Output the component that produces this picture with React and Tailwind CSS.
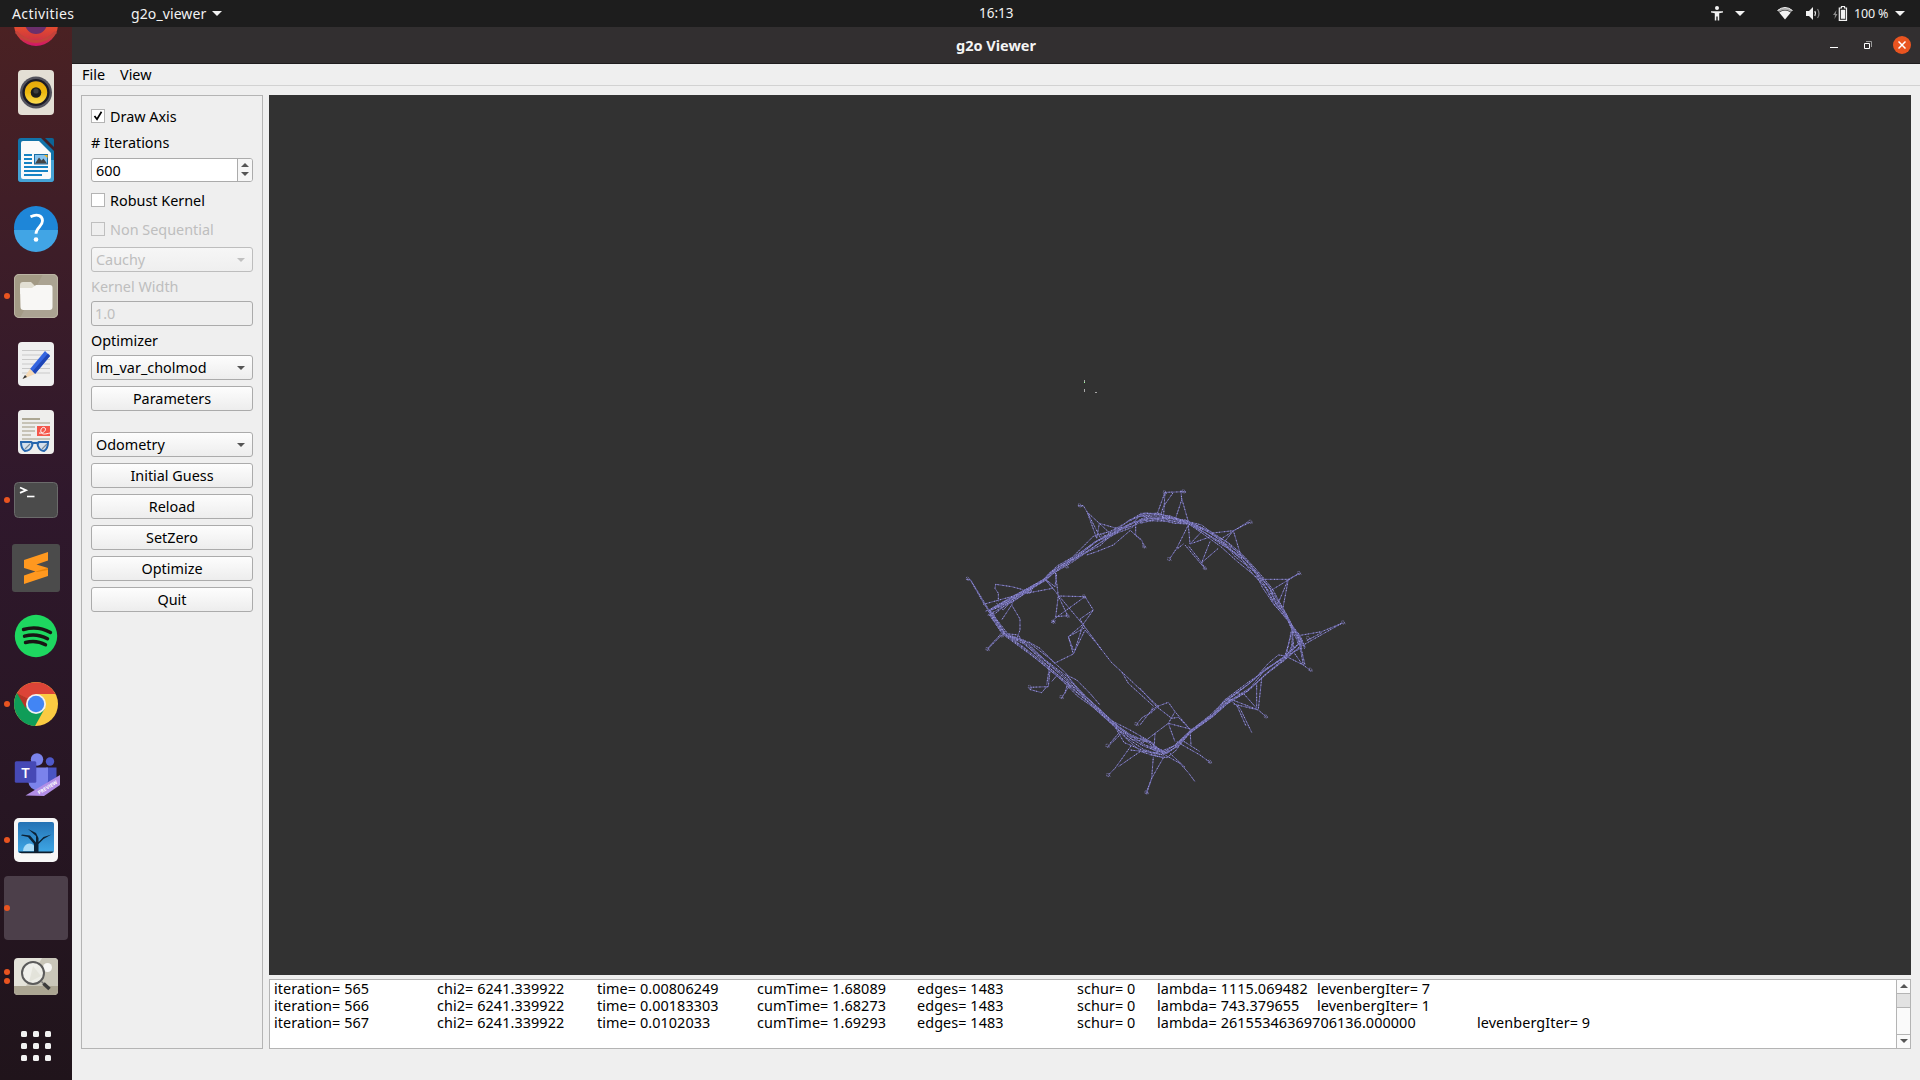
import React from "react";

/* ---------- pose graph ---------- */

const BANDS = [
  [[150, 425, 15], [220, 385, 12], [315, 328, 5], [345, 300, 9], [400, 265, 10], [470, 215, 18], [520, 188, 10], [570, 160, 15], [610, 142, 11], [660, 142, 12], [700, 147, 8], [745, 158, 6]],
  [[745, 158, 5], [800, 187, 11], [850, 218, 16], [900, 262, 15], [940, 300, 13], [980, 350, 13], [1010, 400, 9], [1040, 440, 5], [1058, 475, 3], [1075, 500, 10], [1085, 530, 12]],
  [[1078, 520, 14], [1037, 560, 8], [970, 608, 12], [920, 655, 11], [866, 690, 7], [815, 738, 7], [750, 785, 6], [710, 828, 8], [675, 852, 10], [630, 835, 18]],
  [[150, 425, 8], [190, 490, 10], [250, 520, 16], [310, 568, 16], [370, 620, 14], [410, 662, 11], [460, 708, 12], [520, 762, 11], [570, 803, 22], [620, 828, 24], [660, 848, 12]],
];

const TRACKS = [
  { dx: 0, dy: 0, lines: [
    "415,107 430,107 442,127 478,160 530,175 570,170", "442,127 470,205", "442,127 482,205", "478,160 470,205", "478,160 510,190",
    "570,150 600,133 650,130", "587,150 587,195 605,210 613,232", "570,180 600,208", "440,255 470,245 520,225 570,182",
    "345,300 355,378", "350,310 345,350 317,328", "315,328 338,355 232,375 130,403", "317,328 357,378", "80,327 92,330 150,425",
    "90,328 133,403 165,450", "175,395 175,370 165,355 167,343 215,350 245,358 270,370 280,350", "150,420 315,326", "232,375 315,330",
    "355,378 435,380 460,420 430,462 385,500 400,540", "355,378 347,440 383,437", "355,378 383,437", "435,380 345,445 335,457 347,452",
    "357,378 430,465 460,505 485,540", "430,462 403,545", "385,500 437,472", "460,420 420,447 433,470", "215,405 240,447 240,480 230,508",
    "215,405 185,450", "170,400 190,420 220,385", "180,495 143,535", "190,490 235,495 250,520", "180,410 225,380 215,405",
  ] },
  { dx: 600, dy: 0, lines: [
    "75,67 138,65", "75,67 52,130", "100,67 70,110 62,135", "75,67 70,150", "123,60 125,90 105,150", "125,85 145,155",
    "0,130 55,130 105,148 145,155", "145,165 110,235 88,268", "145,165 150,222 212,200", "130,222 110,238", "145,227 185,278 195,297",
    "135,225 190,290", "185,278 210,215", "185,278 235,235", "150,222 185,185", "210,190 280,182 332,156", "230,215 325,155",
    "280,182 250,220", "280,182 305,265", "365,328 445,328 478,310", "390,363 478,310", "445,328 412,405", "445,328 428,418",
    "475,497 545,485 610,458", "490,525 605,460", "500,512 545,488", "455,478 438,560", "458,475 455,545", "475,500 490,585",
    "0,160 50,148 105,160 145,162", "250,220 300,265", "145,155 185,165 230,200",
  ] },
  { dx: 0, dy: 480, lines: [
    "185,15 140,60", "435,0 400,72 343,100", "385,20 400,72", "435,0 470,40 515,98 550,130 655,230", "545,125 565,160 640,228",
    "655,230 630,250 607,262 590,283", "635,250 637,232", "330,120 325,170 268,172", "268,178 305,188 322,168", "330,100 320,165",
    "335,155 352,135", "390,165 365,203", "385,150 375,190", "380,135 410,150 450,190 480,225", "545,310 503,350", "540,305 510,340",
    "575,345 525,415 503,437", "600,365 535,410", "640,380 635,445 620,490", "570,360 660,370", "520,275 570,300 640,340", "265,35 300,55 345,100",
  ] },
  { dx: 600, dy: 480, lines: [
    "0,175 50,230 95,265", "85,217 105,245 150,298", "0,285 35,240 50,230 85,217", "95,265 115,262 150,298", "85,280 155,298", "85,280 105,335",
    "105,245 85,280 45,310 0,345", "150,298 153,345", "110,335 150,358 180,375 210,397", "125,330 180,365", "75,375 120,400 145,428 165,455",
    "90,370 135,412", "72,380 35,445 18,490", "45,310 42,360", "0,320 42,345 75,372", "265,205 350,238", "280,222 355,240 378,260",
    "365,145 355,238", "350,160 350,235", "310,190 350,235", "265,205 300,235 335,307", "290,225 318,288", "350,140 385,100 415,75 440,78",
    "440,80 490,105 512,122", "435,78 458,0", "475,20 495,105", "460,65 488,105", "458,0 460,60",
  ] },
];

const TIPS = [
  [420, 107], [84, 327], [613, 230], [732, 65], [675, 68], [932, 156], [1078, 310], [1210, 458], [1112, 600], [978, 740],
  [143, 538], [270, 652], [365, 682], [503, 828], [505, 916], [620, 968], [810, 876], [688, 268], [795, 295], [590, 763],
  [340, 456], [433, 380], [185, 497], [228, 508], [865, 690], [893, 668], [380, 290], [490, 197], [270, 362], [383, 438], [1105, 505],
];

function strands(band, seed) {
  let s = seed * 7919 + 17;
  const rnd = () => {
    s = (s * 16807) % 2147483647;
    return (s / 2147483647) * 2 - 1;
  };
  rnd();
  return Array.from({ length: 8 }, (_, k) => {
    const base = (k / 7) * 2 - 1;
    return band
      .map(([x, y, w], i) => {
        const [px, py] = band[Math.max(0, i - 1)];
        const [nx, ny] = band[Math.min(band.length - 1, i + 1)];
        const len = Math.hypot(nx - px, ny - py);
        const ux = (nx - px) / len;
        const uy = (ny - py) / len;
        const o = (base * 0.65 + rnd() * 0.5) * w;
        const slide = rnd() * 14;
        return `${(x - uy * o + ux * slide).toFixed(1)},${(y + ux * o + uy * slide).toFixed(1)}`;
      })
      .join(" ");
  });
}

function Edge({ points, phase = 0 }) {
  return (
    <>
      <polyline points={points} stroke="#6562a4" strokeWidth="3" strokeOpacity="0.85" />
      <polyline points={points} stroke="#b3b0f6" strokeWidth="3" strokeDasharray="3 8 3 5 3 12" strokeDashoffset={phase} strokeOpacity="0.85" />
    </>
  );
}

function PoseGraph() {
  return (
    <svg className="block h-full w-full" viewBox="269 95 1642 880" fill="none">
      <g transform="translate(940 470) scale(0.33333)" strokeLinejoin="round">
        {BANDS.map((b, i) => strands(b, i + 1).map((p, j) => <Edge key={`${i}-${j}`} points={p} phase={j * 5} />))}
        {TRACKS.map((t, i) => (
          <g key={i} transform={`translate(${t.dx} ${t.dy})`}>
            {t.lines.map((p, j) => <Edge key={j} points={p} phase={j * 4} />)}
          </g>
        ))}
        {TIPS.map(([x, y], i) => (
          <path key={i} d={`M${x - 6} ${y - 4}l5 -2l5 4l-2 6l-6 -1l-2 -5m9 3l4 3`} stroke="#9490da" strokeWidth="2" strokeDasharray="4 2" />
        ))}
      </g>
      <path d="M1084 380h1v2h-1zM1084 389h1v3h-1zM1095 392h2v1h-2z" fill="#a8a8a8" />
      <path d="M1084 382h1v1h-1z" fill="#9dfb9d" />
    </svg>
  );
}

/* ---------- dock ---------- */

const Icon = ({ children, size = 48 }) => (
  <svg width={size} height={size} viewBox="0 0 48 48" fill="none">{children}</svg>
);

const FirefoxIcon = () => (
  <Icon>
    <defs>
      <linearGradient id="ff" x1="0" y1="0" x2="0" y2="1">
        <stop offset="0.5" stopColor="#e8502c" />
        <stop offset="0.8" stopColor="#d23a3c" />
        <stop offset="1" stopColor="#d3146c" />
      </linearGradient>
    </defs>
    <circle cx="24" cy="24" r="22" fill="url(#ff)" />
    <path d="M4 32q20 19 40 0" stroke="#c3433a" strokeWidth="3" />
    <circle cx="24" cy="23" r="11" fill="#6b2f6b" />
  </Icon>
);

const RhythmboxIcon = () => (
  <Icon>
    <defs>
      <linearGradient id="rb" x1="0" y1="0" x2="0" y2="1">
        <stop offset="0" stopColor="#e8a90c" />
        <stop offset="0.5" stopColor="#edb80f" />
        <stop offset="1" stopColor="#fbdc50" />
      </linearGradient>
    </defs>
    <rect x="6" y="2" width="36" height="45" rx="4" fill="#e3dfd5" />
    <circle cx="24" cy="24.5" r="16" fill="#53535d" />
    <circle cx="24" cy="24.5" r="13.6" fill="#1b1b26" />
    <circle cx="24" cy="24.5" r="11.2" fill="url(#rb)" />
    <circle cx="24" cy="24.5" r="5.3" fill="#1d1d1d" />
    <circle cx="24" cy="23" r="2.6" fill="#3e3e3e" />
  </Icon>
);

const WriterIcon = () => (
  <Icon>
    <path d="M9 2h20l13 13v28a3 3 0 0 1-3 3H9a3 3 0 0 1-3-3V5a3 3 0 0 1 3-3z" fill="#1273a9" />
    <path d="M6 24h36v19a3 3 0 0 1-3 3H9a3 3 0 0 1-3-3z" fill="#45a3d6" />
    <path d="M33 2h7a2 2 0 0 1 2 2v7z" fill="#0c6596" />
    <path d="M11 5h16l12 12v24a2 2 0 0 1-2 2H11a2 2 0 0 1-2-2V7a2 2 0 0 1 2-2z" fill="#fafafa" />
    <path d="M12 19h8M12 23h8M12 27h8M12 31h24M12 35h24M12 39h18" stroke="#1583c4" strokeWidth="2" />
    <rect x="22.5" y="18.5" width="13" height="9.5" fill="#86c3ee" stroke="#1a6fa5" />
    <path d="M23 27.5l4-6 2.500 3 2-2 3.500 5z" fill="#444" />
    <path d="M32 19h3.500v3z" fill="#f6b420" />
  </Icon>
);

const HelpIcon = () => (
  <Icon>
    <circle cx="24" cy="24" r="22" fill="#1e86d8" />
    <path d="M2 26h44a22 22 0 0 1-44 0z" fill="#41a5e5" />
    <path d="M18.500 12.800c7-3.500 12-1 12 4 0 6-6.500 6.500-6.500 13" stroke="#fff" strokeWidth="2.800" />
    <circle cx="24" cy="35.500" r="2.300" fill="#fff" />
  </Icon>
);

const FilesIcon = () => (
  <Icon>
    <rect x="2" y="2" width="44" height="44" rx="5" fill="#a39a85" />
    <path d="M31 2h10a5 5 0 0 1 5 5v34a5 5 0 0 1-5 5H8z" fill="#aba392" />
    <rect x="2.5" y="2.5" width="43" height="43" rx="4.5" stroke="#bbb4a4" />
    <path d="M8 13a3 3 0 0 1 3-3h8l4 4h10v8H8z" fill="#e2dfd3" />
    <path d="M8 16h12l4-3h14a2.500 2.500 0 0 1 2.500 2.500V35a3 3 0 0 1-3 3h-26a3 3 0 0 1-3-3z" fill="#f8f7f5" />
  </Icon>
);

const GeditIcon = () => (
  <Icon>
    <rect x="6" y="2" width="36" height="44" rx="4" fill="#efefef" />
    <path d="M10 10.500h28M10 15h28M10 19.500h28M10 24h28M10 28.500h28M10 33h28" stroke="#c9c9c9" />
    <path d="M33 11l5 5-15 18-5-5z" fill="#3465e0" />
    <path d="M36 13.500l2 2.500-15 18-2.500-2.500z" fill="#1f46b6" />
    <path d="M18 29l5 5-12 5z" fill="#f5d9b4" />
    <path d="M13 35l2 2-4.500 2z" fill="#333" />
  </Icon>
);

const EvinceIcon = () => (
  <Icon>
    <rect x="6" y="2" width="36" height="44" rx="4" fill="#eeeeec" />
    <path d="M10 11h18" stroke="#aca793" strokeWidth="2" />
    <path d="M10 15h28M10 19h13M10 23h13M10 27h9M10 31h28" stroke="#c7c3b6" strokeWidth="2" />
    <rect x="25" y="18" width="13" height="10" fill="#f4574b" />
    <path d="M27 25c4 1 8-3 6-5s-5 1-4 4 5 2 9 1" stroke="#fff" />
    <path d="M8 34c4-1.500 9-1 12 0 2-1 6-1 8 0 3-1 6-1 9 0-0.500 5-1 8-5 9-4 0-6-3-7-7h-3c-1 4-4 7-8 7-4-1-5-4-6-9z" fill="#d4e0ec" />
    <path d="M8 34h11q2 1 1 4-2 5-7 5-4-2-4-9M37 34H27q-2 1-1 4 2 5 6 5 4-2 4-9M20 35h7" stroke="#2666ae" strokeWidth="2" />
    <path d="M13 41l5-5M30 41l5-5" stroke="#7d8b99" strokeWidth="1.2" />
  </Icon>
);

const TerminalIcon = () => (
  <Icon>
    <rect x="2.5" y="6.5" width="43" height="35" rx="4" fill="#4b4b4b" stroke="#6b6b6b" />
    <path d="M8 11.500l6 2.700-6 2.700" stroke="#fff" strokeWidth="1.800" />
    <path d="M15 20.500h7.500" stroke="#fff" strokeWidth="1.600" />
  </Icon>
);

const SublimeIcon = () => (
  <Icon>
    <rect width="48" height="48" rx="3" fill="#4b4b4b" />
    <path d="M12 16l24-8v8.500L24.500 20.500 36 24v8l-24 8v-8.500l11.500-4L12 24z" fill="#ff981f" />
    <path d="M23.500 27.500L36 24v2L25 28z" fill="#e88207" />
  </Icon>
);

const SpotifyIcon = () => (
  <Icon>
    <circle cx="24" cy="24" r="21.2" fill="#1ed760" />
    <path d="M11.500 17.500q14.500-4 27 3M12.500 24.200q12-3.500 23 2.600M13.500 30.500q11-2.800 20 2.300" stroke="#191414" strokeLinecap="round" strokeWidth="3.400" />
  </Icon>
);

const ChromeIcon = () => (
  <Icon>
    <circle cx="24" cy="24" r="22" fill="#fbcb42" />
    <path d="M24 24L5 13A22 22 0 0 0 23 46l9.500-17z" fill="#0f9d58" />
    <path d="M24 24L5 13a22 22 0 0 1 38.500 1H24z" fill="#dc4437" />
    <path d="M5 13l8.500 15 3-9z" fill="#b93527" />
    <circle cx="24" cy="24" r="10" fill="#f1f1f1" />
    <circle cx="24" cy="24" r="8.2" fill="#4285f4" />
  </Icon>
);

const TeamsIcon = () => (
  <Icon>
    <circle cx="38" cy="13.5" r="4.2" fill="#4f59ca" />
    <path d="M34 19.500h10.500v12q-1 6-7 6.500H32z" fill="#4a54c4" />
    <circle cx="25" cy="11.5" r="6.2" fill="#7b83eb" />
    <path d="M16 19.500h20v13q-1 10-10 10-9-1-10-10z" fill="#7b83eb" />
    <rect x="2.8" y="13.3" width="21.5" height="21.5" rx="1.5" fill="#4649b5" />
    <text x="13.5" y="29.5" textAnchor="middle" fill="#fff" className="font-['Open_Sans'] text-[15px] font-semibold">T</text>
    <path d="M13.500 47.500L48 27v10L32 48z" fill="#b18ee6" />
    <text x="0" y="0" transform="translate(27 46.5) rotate(-31)" fill="#fff" className="font-['Open_Sans'] text-[5px] font-bold">PREVIEW</text>
  </Icon>
);

const PhotosIcon = () => (
  <Icon>
    <defs>
      <linearGradient id="sky" x1="0" y1="0" x2="0" y2="1">
        <stop offset="0" stopColor="#2472b4" />
        <stop offset="1" stopColor="#3fa8e6" />
      </linearGradient>
    </defs>
    <rect x="2" y="2" width="44" height="44" rx="5" fill="#f7f7f7" />
    <rect x="6" y="6" width="36" height="31" rx="2" fill="url(#sky)" />
    <path d="M11 35a6.500 7.500 0 0 1 13 0z" fill="#a9dcf7" />
    <path d="M6.500 35.500h35q-1 1.800-3 1.800h-29q-2 0-3-1.800z" fill="#0c1c2c" />
    <path d="M22 36V28L16 21 9 19.500l1-1 8 1 6 7V20l-8-7 8 4 2.500 5V26l5-5 8-2.500-8 4.500-5 5v8z" fill="#0c2236" />
  </Icon>
);

const MagnifierIcon = () => (
  <Icon>
    <rect x="2" y="6" width="44" height="37" rx="4" fill="#e4e3da" />
    <path d="M30 6h12a4 4 0 0 1 4 4v24H14z" fill="#c9c6b9" />
    <path d="M2 34h44v5a4 4 0 0 1-4 4H6a4 4 0 0 1-4-4z" fill="#aba592" />
    <circle cx="35.5" cy="15.5" r="4.5" fill="#f7f7f5" />
    <circle cx="21" cy="21" r="11" fill="#f1f1ec" fillOpacity="0.9" stroke="#5b5b5b" strokeWidth="2" />
    <path d="M17 30l4-16 8 10z" fill="#dcdcd2" fillOpacity="0.6" />
    <path d="M29.500 29.500l3 3" stroke="#777" strokeWidth="1.500" />
    <path d="M31.500 31.500l6 5.500" stroke="#3b3b3b" strokeWidth="3.600" />
  </Icon>
);

const DOCK = [
  { icon: FirefoxIcon, dots: 0 },
  { icon: RhythmboxIcon, dots: 0 },
  { icon: WriterIcon, dots: 0 },
  { icon: HelpIcon, dots: 0 },
  { icon: FilesIcon, dots: 1 },
  { icon: GeditIcon, dots: 0 },
  { icon: EvinceIcon, dots: 0 },
  { icon: TerminalIcon, dots: 1 },
  { icon: SublimeIcon, dots: 0 },
  { icon: SpotifyIcon, dots: 0 },
  { icon: ChromeIcon, dots: 1 },
  { icon: TeamsIcon, dots: 0 },
  { icon: PhotosIcon, dots: 1 },
  { icon: null, dots: 1, active: true },
  { icon: MagnifierIcon, dots: 2 },
];

function Dock() {
  return (
    <aside className="w-[72px] shrink-0 overflow-hidden bg-linear-to-b from-[#4a2123] via-[#2f182c] via-45% to-[#20141b]">
      <div className="-mt-[35px] flex flex-col gap-1 px-1">
        {DOCK.map(({ icon: I, dots, active }, i) => (
          <div key={i} className={`relative flex h-16 items-center justify-center rounded ${active ? "bg-[#4c3f4a]" : ""}`}>
            {I && <I />}
            <div className="absolute inset-y-0 left-0 flex flex-col justify-center gap-[3px]">
              {Array.from({ length: dots }, (_, k) => (
                <span key={k} className="size-1.5 rounded-full bg-[#e95420]" />
              ))}
            </div>
          </div>
        ))}
        <div className="mt-[2px] flex h-16 items-center justify-center">
          <div className="grid grid-cols-3 gap-1.5">
            {Array.from({ length: 9 }, (_, k) => (
              <span key={k} className="size-1.5 rounded-[1.5px] bg-[#f2f2f2]" />
            ))}
          </div>
        </div>
      </div>
    </aside>
  );
}

/* ---------- shell bars ---------- */

const Caret = ({ className = "" }) => (
  <svg width="10" height="5" viewBox="0 0 10 5" className={className}>
    <path d="M0 0h10L5 5z" fill="#f2f2f2" />
  </svg>
);

function TopBar() {
  return (
    <header className="grid h-[27px] shrink-0 grid-cols-3 items-center bg-[#1d1d1d] text-[14px] leading-[27px] text-[#f2f2f2]">
      <div className="flex items-center pl-3">
        <span className="w-[119px] tracking-[0.400px]">Activities</span>
        <span className="tracking-[0.100px]">g2o_viewer</span>
        <Caret className="ml-1.5" />
      </div>
      <div className="pl-[339px] text-[13.5px]">16:13</div>
      <div className="flex items-center justify-end pr-[15px]">
        <svg width="12" height="15" viewBox="0 0 12 15" className="mr-3">
          <circle cx="6" cy="2" r="2" fill="#f2f2f2" />
          <path d="M0 5.200h12v1.300L8.200 7.200V14.500H6.700V10.500H5.300v4H3.800V7.200L0 6.500z" fill="#f2f2f2" />
        </svg>
        <Caret className="mr-8" />
        <svg width="16" height="13" viewBox="0 0 16 13" className="mr-[13px]">
          <path d="M0.500 3.500Q8-2.500 15.500 3.500L14 5Q8 0.800 2 5z" fill="#a9a9a9" />
          <path d="M0.500 3.500Q8-2.500 15.500 3.500" fill="none" stroke="#f2f2f2" />
          <path d="M2.200 5.500Q8 1.500 13.800 5.500L8 12.500z" fill="#f2f2f2" />
        </svg>
        <svg width="15" height="13" viewBox="0 0 15 13" className="mr-3" fill="none">
          <path d="M0 4h3l4-4v13L3 9H0z" fill="#f2f2f2" />
          <path d="M8.800 4.200q1.600 2.300 0 4.600" stroke="#f2f2f2" strokeWidth="1.300" />
          <path d="M11.500 2q3 4.500 0 9" stroke="#7d7d7d" strokeWidth="1.300" />
        </svg>
        <svg width="15" height="15" viewBox="0 0 15 15" className="mr-1.5" fill="none">
          <path d="M3.500 4L0 9h2l-0.500 4L4.500 8H2.700z" fill="#8b8b8b" />
          <path d="M8.500 0.500h3v1.500h2v12.300h-7.200V2h2.200z" stroke="#f2f2f2" strokeWidth="1.200" />
          <path d="M7.800 3.800h4.400v9H7.800z" fill="#f2f2f2" />
        </svg>
        <span className="mr-2 w-[33px] text-[12.5px] tracking-[-0.200px] whitespace-nowrap">100 %</span>
        <Caret />
      </div>
    </header>
  );
}

function TitleBar() {
  return (
    <div className="grid h-[37px] shrink-0 grid-cols-[1fr_auto_1fr] items-center border-b border-[#1f1d1e] bg-[#322f30] text-[#f4f4f4]">
      <span />
      <h1 className="pt-0.5 text-[14.5px] font-bold">g2o Viewer</h1>
      <div className="flex items-center justify-end pr-[9px]">
        <svg width="8" height="10" className="mr-[26px]"><path d="M0 7h8v1H0z" fill="#fff" /></svg>
        <svg width="8" height="8" viewBox="0 0 8 8" className="mr-[21px]" fill="none">
          <path d="M2 0.500h5.500V6" stroke="#9a9a9a" />
          <path d="M0.500 2.500h5v5h-5z" stroke="#fff" />
        </svg>
        <span className="flex size-[18px] items-center justify-center rounded-full bg-[#e95420]">
          <svg width="8" height="8" viewBox="0 0 8 8"><path d="M0.500 0.500l7 7M7.500 0.500l-7 7" stroke="#fff" strokeWidth="1.500" /></svg>
        </span>
      </div>
    </div>
  );
}

/* ---------- side panel widgets ---------- */

function Check({ label, checked, disabled, className }) {
  return (
    <label className={`flex h-5 items-center gap-[5px] ${disabled ? "text-[#bebebe]" : "text-black"} ${className}`}>
      <span className={`flex size-3.5 items-center justify-center border ${disabled ? "border-[#bfbfbf] bg-[#efefef]" : "border-[#b4b4b4] bg-white"}`}>
        {checked && (
          <svg width="10" height="10" viewBox="0 0 10 10" fill="none">
            <path d="M1.500 5l2.500 3.200L8.500 0.800" stroke="#000" strokeWidth="1.700" />
          </svg>
        )}
      </span>
      <span className="pt-0.5">{label}</span>
    </label>
  );
}

const Tri = ({ up, fill = "#555" }) => (
  <svg width="8" height="4" viewBox="0 0 8 4"><path d={up ? "M0 4h8L4 0z" : "M0 0h8L4 4z"} fill={fill} /></svg>
);

function Combo({ value, disabled, className }) {
  return (
    <div className={`flex h-[25px] items-center justify-between rounded-[3px] border bg-linear-to-b pr-[7px] pl-1 ${disabled ? "border-[#bdbdbd] from-[#f6f6f6] to-[#efefef] text-[#bebebe]" : "border-[#ababab] from-[#fdfdfd] to-[#ededed] text-black"} ${className}`}>
      <span>{value}</span>
      <Tri fill={disabled ? "#c0c0c0" : "#555"} />
    </div>
  );
}

const Button = ({ children }) => (
  <button className="mt-1.5 flex h-[25px] shrink-0 items-center justify-center rounded-[3px] border border-[#ababab] bg-linear-to-b from-[#fdfdfd] to-[#ededed]">
    {children}
  </button>
);

function SidePanel() {
  return (
    <section className="flex w-[182px] shrink-0 flex-col border border-[#b4b4b4] px-[9px] pt-[10px] leading-5">
      <Check label="Draw Axis" checked />
      <div className="mt-[7px] h-5">#&nbsp;Iterations</div>
      <div className="mt-[5px] flex h-6 rounded-[3px] border border-[#ababab] bg-white">
        <span className="flex-1 pl-1 leading-[23px]">600</span>
        <div className="flex w-[15px] flex-col items-center justify-center gap-[5px] rounded-r-[2px] border-l border-[#ababab] bg-[#f6f6f6] pr-px pb-px">
          <Tri up />
          <Tri />
        </div>
      </div>
      <Check label="Robust Kernel" className="mt-2" />
      <Check label="Non Sequential" disabled className="mt-[9px]" />
      <Combo value="Cauchy" disabled className="mt-2" />
      <div className="mt-[5px] h-5 text-[#bebebe]">Kernel Width</div>
      <div className="mt-1 h-[25px] rounded-[3px] border border-[#ababab] bg-[#efefef] pl-[3px] leading-6 text-[#bebebe]">1.0</div>
      <div className="mt-[5px] h-5">Optimizer</div>
      <Combo value="lm_var_cholmod" className="mt-1" />
      <Button>Parameters</Button>
      <Combo value="Odometry" className="mt-[21px]" />
      <Button>Initial Guess</Button>
      <Button>Reload</Button>
      <Button>SetZero</Button>
      <Button>Optimize</Button>
      <Button>Quit</Button>
    </section>
  );
}

/* ---------- log ---------- */

const LOG = [
  { it: 565, time: "0.00806249", cum: "1.68089", lambda: "1115.069482", lev: 7 },
  { it: 566, time: "0.00183303", cum: "1.68273", lambda: "743.379655", lev: 1 },
  { it: 567, time: "0.0102033", cum: "1.69293", lambda: "26155346369706136.000000", lev: 9, wide: true },
];

function Log() {
  return (
    <section className="flex h-[71px] border border-[#b4b4b4] bg-white">
      <div className="flex-1 pl-1 leading-[17px] tracking-[0.080px]">
        {LOG.map((r) => (
          <div key={r.it} className="flex whitespace-nowrap">
            <span className="w-[163px]">iteration= {r.it}</span>
            <span className="w-40">chi2= 6241.339922</span>
            <span className="w-40">time= {r.time}</span>
            <span className="w-40">cumTime= {r.cum}</span>
            <span className="w-40">edges= 1483</span>
            <span className="w-20">schur= 0</span>
            <span className={r.wide ? "w-80" : "w-40"}>lambda= {r.lambda}</span>
            <span>levenbergIter= {r.lev}</span>
          </div>
        ))}
      </div>
      <div className="flex w-[14px] flex-col border-l border-[#b4b4b4] bg-[#fafafa]">
        <div className="flex h-[13px] items-center justify-center pb-px"><Tri up /></div>
        <div className="h-[15px] border-y border-[#b4b4b4] bg-[#e2e2e2]" />
        <div className="flex-1" />
        <div className="flex h-[14px] items-center justify-center border-t border-[#b4b4b4] pb-0.5"><Tri /></div>
      </div>
    </section>
  );
}

export default function App() {
  return (
    <div className="flex h-[1080px] w-[1920px] flex-col overflow-hidden bg-[#efefef] font-['Noto_Sans','Open_Sans',sans-serif] text-[14.4px] text-black">
      <TopBar />
      <div className="flex min-h-0 flex-1">
        <Dock />
        <main className="flex min-w-0 flex-1 flex-col">
          <TitleBar />
          <nav className="flex h-[22px] shrink-0 gap-[15px] border-b border-[#d2d2d2] pl-[10px] leading-[22px]">
            <span>File</span>
            <span>View</span>
          </nav>
          <div className="flex min-h-0 flex-1 gap-[6px] pt-[9px] pr-[9px] pb-[31px] pl-[9px]">
            <SidePanel />
            <div className="flex min-w-0 flex-1 flex-col gap-1">
              <div className="h-[880px] bg-[#323232]">
                <PoseGraph />
              </div>
              <Log />
            </div>
          </div>
        </main>
      </div>
    </div>
  );
}
